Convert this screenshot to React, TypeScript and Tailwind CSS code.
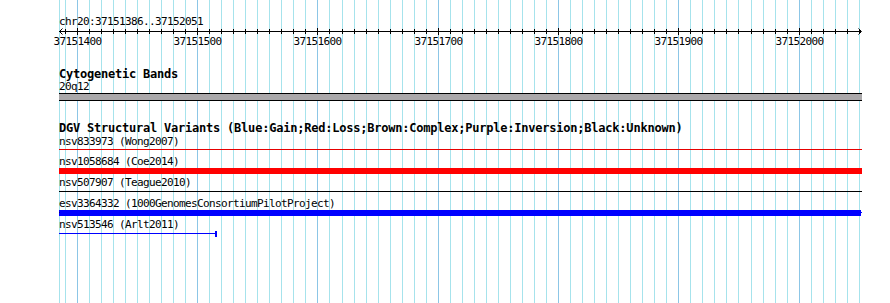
import React from 'react';

const START = 37151386;
const END = 37152051;
const SCALE = 800 / (END - START);

// pixel position of a base on the panel
const xOf = (bp: number) => Math.floor(60.5 + (bp - START) * SCALE) + 0.5;

const gridBases: number[] = [];
for (let bp = 37151390; bp <= 37152050; bp += 10) gridBases.push(bp);

function GridLines() {
  return (
    <svg className="absolute inset-0" width={890} height={303}>
      <line x1={59.5} x2={59.5} y1={0} y2={303} stroke="#a6e3ec" strokeWidth={1} />
      {gridBases.map((bp) => (
        <line
          key={bp}
          x1={xOf(bp)}
          x2={xOf(bp)}
          y1={0}
          y2={303}
          stroke={bp % 100 === 0 ? '#8cc6e6' : '#a6e3ec'}
          strokeWidth={1}
        />
      ))}
    </svg>
  );
}

function Ruler() {
  return (
    <svg width={890} height={20} className="block overflow-visible">
      <line x1={59} x2={861} y1={3.5} y2={3.5} stroke="#000" strokeWidth={1} />
      <polyline points="62.5,0.5 59.5,3.5 62.5,6.5" fill="none" stroke="#000" strokeWidth={1} />
      <polyline points="858.5,0.5 861.5,3.5 858.5,6.5" fill="none" stroke="#000" strokeWidth={1} />
      {gridBases.map((bp) => {
        const major = bp % 100 === 0;
        return (
          <line
            key={bp}
            x1={xOf(bp)}
            x2={xOf(bp)}
            y1={major ? 0 : 1}
            y2={major ? 7 : 6}
            stroke="#000"
            strokeWidth={1}
          />
        );
      })}
      {gridBases
        .filter((bp) => bp % 100 === 0)
        .map((bp) => (
          <text
            key={bp}
            x={xOf(bp)}
            y={16.5}
            textAnchor="middle"
            fontSize={11}
            letterSpacing={-0.62}
            fontFamily="'DejaVu Sans Mono', monospace"
            fill="#000"
          >
            {bp}
          </text>
        ))}
    </svg>
  );
}

function Label({ children }: { children: React.ReactNode }) {
  return (
    <div className="h-[13px] text-[11px] leading-[13px] tracking-[-0.62px] whitespace-nowrap">{children}</div>
  );
}

function Title({ children }: { children: React.ReactNode }) {
  return (
    <div className="h-[14px] text-[12px] font-bold leading-[14px] tracking-[-0.22px] whitespace-nowrap">
      {children}
    </div>
  );
}

export default function App() {
  return (
    <div className="relative w-[890px] h-[303px] overflow-hidden bg-white text-black font-['DejaVu_Sans_Mono',monospace]">
      <GridLines />

      <div className="relative flex flex-col pt-[15px]">
        {/* position header */}
        <div className="pl-[59px]">
          <Label>chr20:37151386..37152051</Label>
        </div>

        {/* ruler */}
        <Ruler />

        <div className="ml-[59px] w-[803px] flex flex-col">
          {/* Cytogenetic bands */}
          <div className="mt-[19px]">
            <Title>Cytogenetic Bands</Title>
          </div>
          <div className="h-[12px] text-[11px] leading-[12px] tracking-[-0.62px]">20q12</div>
          <div className="h-[8px] border-y border-black bg-[#aaa8aa]" />

          {/* DGV */}
          <div className="mt-[20px]">
            <Title>DGV Structural Variants (Blue:Gain;Red:Loss;Brown:Complex;Purple:Inversion;Black:Unknown)</Title>
          </div>

          <Label>nsv833973 (Wong2007)</Label>
          <div className="mt-[1px] mb-[5px] h-[1px] bg-[#e60000]" />

          <Label>nsv1058684 (Coe2014)</Label>
          <div className="mb-[2px] h-[6px] bg-[#ff0000]" />

          <Label>nsv507907 (Teague2010)</Label>
          <div className="mt-[2px] mb-[5px] h-[1px] bg-black" />

          <Label>esv3364332 (1000GenomesConsortiumPilotProject)</Label>
          <div className="relative mb-[2px] h-[6px] w-[802px] bg-[#0000ff]">
            <div className="absolute left-0 top-[2px] h-[1px] w-[1px] bg-[#00008b]" />
            <div className="absolute -right-[1px] top-[2px] h-[1px] w-[1px] bg-[#0000ff]" />
          </div>

          <Label>nsv513546 (Arlt2011)</Label>
          <div className="relative mt-[2px] h-[1px] w-[158px] bg-[#0000ff]">
            <div className="absolute right-0 -top-[2px] h-[6px] w-[2px] bg-[#0000ff]" />
          </div>
        </div>
      </div>
    </div>
  );
}
